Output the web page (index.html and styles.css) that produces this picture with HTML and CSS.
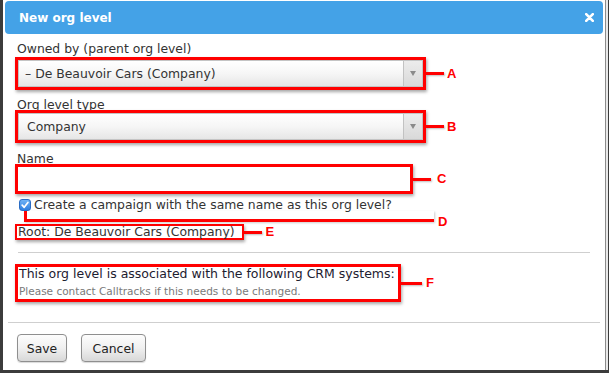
FILE: index.html
```html
<!DOCTYPE html>
<html>
<head>
<meta charset="utf-8">
<link rel="stylesheet" href="styles.css">
</head>
<body>
<div class="screen">
  <div class="dialog">
    <div class="header">
      <span class="title">New org level</span>
      <svg class="close" width="9" height="9" viewBox="0 0 9 9"><path d="M1.2 1.2 L7.8 7.8 M7.8 1.2 L1.2 7.8" stroke="#fff" stroke-width="2.6" stroke-linecap="round"/></svg>
    </div>
    <div class="content">
      <div class="label">Owned by (parent org level)</div>
      <div class="row">
        <div class="mark mark-select">
          <div class="select"><span class="value value-indent">– De Beauvoir Cars (Company)</span><span class="arrow"><i class="tri"></i></span></div>
        </div>
        <span class="callout"><i class="cline"></i><b class="letter">A</b></span>
      </div>

      <div class="label label-b">Org level type</div>
      <div class="row row-b">
        <div class="mark mark-select">
          <div class="select"><span class="value">Company</span><span class="arrow"><i class="tri"></i></span></div>
        </div>
        <span class="callout"><i class="cline"></i><b class="letter">B</b></span>
      </div>

      <div class="label label-c">Name</div>
      <div class="row row-c">
        <div class="mark mark-input"><div class="input"></div></div>
        <span class="callout"><i class="cline"></i><b class="letter">C</b></span>
      </div>

      <div class="check-row">
        <span class="checkbox"><svg width="8" height="8" viewBox="0 0 8 8"><path d="M1.2 4.2 L3.2 6.3 L6.9 1.4" fill="none" stroke="#fff" stroke-width="1.7" stroke-linecap="round" stroke-linejoin="round"/></svg></span>
        <span class="check-text">Create a campaign with the same name as this org level?</span>
        <span class="d-line"></span>
        <b class="letter d-letter">D</b>
      </div>

      <div class="row row-e">
        <div class="mark mark-e">Root: De Beauvoir Cars (Company)</div>
        <span class="callout"><i class="cline"></i><b class="letter">E</b></span>
      </div>

      <div class="rule"></div>

      <div class="row row-f">
        <div class="mark mark-f">
          <div class="crm">This org level is associated with the following CRM systems:</div>
          <div class="note">Please contact Calltracks if this needs to be changed.</div>
        </div>
        <span class="callout"><i class="cline"></i><b class="letter">F</b></span>
      </div>
    </div>
    <div class="footer">
      <button class="btn btn-save">Save</button>
      <button class="btn btn-cancel">Cancel</button>
    </div>
  </div>
  <div class="edge"></div>
</div>
</body>
</html>
```

FILE: styles.css
```css
html, body {
  margin: 0;
  padding: 0;
}
body {
  background: #3c3c3c;
  width: 609px;
  height: 373px;
  overflow: hidden;
  font-family: "DejaVu Sans", Verdana, sans-serif;
  font-size: 12.4px;
  color: #333;
}
.screen {
  display: flex;
  padding-left: 3px;
  height: 370px;
}
.dialog {
  width: 603px;
  height: 370px;
  background: #fff;
  border-right: 1px solid #8c8c8c;
  box-sizing: border-box;
  padding-top: 1px;
  display: flex;
  flex-direction: column;
}
.edge {
  width: 2px;
  height: 370px;
  background: #e9e9e9;
}
.header {
  margin: 0 2px;
  height: 33px;
  background: #44a2e7;
  border-radius: 4px;
  display: flex;
  align-items: center;
  justify-content: space-between;
  padding: 0 9px 0 14px;
}
.title {
  color: #fff;
  font-weight: bold;
  font-size: 12px;
}
.close {
  display: block;
}
.content {
  padding: 7px 0 0 12px;
  flex: 1;
}
.label {
  line-height: 16px;
  padding-left: 2px;
}
.label-b { margin-top: 7px; }
.label-c { margin-top: 8px; }
.row {
  display: flex;
  align-items: center;
}
.row-b { margin-top: -3px; }
.row-c { margin-top: -3px; }
.mark {
  border: 3px solid #f00;
  box-shadow: 1px 2px 3px rgba(0,0,0,0.35);
  background: #fff;
}
.mark-select {
  width: 405px;
  height: 27px;
}
.select {
  height: 27px;
  box-sizing: border-box;
  border: 1px solid #c4c4c4;
  background: linear-gradient(#ffffff, #f6f6f6 50%, #e6e6e6);
  display: flex;
  align-items: center;
  justify-content: space-between;
}
.value {
  padding-left: 8px;
  color: #333;
}
.value-indent {
  padding-left: 6px;
}
.arrow {
  width: 18px;
  height: 25px;
  border-left: 1px solid #c2c2c2;
  background: linear-gradient(#ececec, #d9d9d9);
  display: flex;
  align-items: center;
  justify-content: center;
}
.tri {
  width: 0;
  height: 0;
  border-left: 3.5px solid transparent;
  border-right: 3.5px solid transparent;
  border-top: 5px solid #8a8a8a;
}
.mark-input {
  width: 392px;
  height: 24px;
}
.input {
  height: 24px;
  background: #fff;
}
.callout {
  display: flex;
  align-items: center;
}
.cline {
  display: block;
  width: 18px;
  height: 3px;
  background: #f00;
  box-shadow: 1px 1px 2px rgba(0,0,0,0.25);
}
.letter {
  font-family: "Liberation Sans", Arial, sans-serif;
  font-weight: bold;
  font-size: 13px;
  color: #f00;
  margin-left: 3px;
  line-height: 14px;
}
.row-c .letter { margin-left: 6px; }
.check-row {
  position: relative;
  margin-top: 3px;
  height: 16px;
  display: flex;
  align-items: center;
  padding-left: 4px;
}
.checkbox {
  width: 12px;
  height: 12px;
  box-sizing: border-box;
  border-radius: 3px;
  background: linear-gradient(#6fb2f5, #2f7fe0);
  border: 1px solid #2a6cc4;
  display: flex;
  align-items: center;
  justify-content: center;
}
.check-text {
  margin-left: 3px;
  line-height: 16px;
}
.d-line {
  position: absolute;
  left: 9px;
  top: 14px;
  width: 407px;
  height: 8px;
  border-left: 3px solid #f00;
  border-bottom: 3px solid #f00;
  box-shadow: 1px 1px 2px rgba(0,0,0,0.2);
}
.d-letter {
  position: absolute;
  left: 423px;
  top: 18px;
  margin-left: 0;
}
.row-e {
  margin-top: 11px;
}
.mark-e {
  border-width: 2px;
  height: 12px;
  line-height: 12px;
  padding: 0 7px 0 1px;
  white-space: nowrap;
  color: #333;
}
.row-e .letter { margin-left: 4px; }
.rule {
  margin: 12px 15px 0 3px;
  height: 1px;
  background: #cfcfcf;
}
.row-f {
  margin-top: 11px;
}
.mark-f {
  width: 379px;
  height: 32px;
  padding-left: 1px;
}
.crm {
  line-height: 14px;
  color: #1d2030;
  white-space: nowrap;
  font-size: 12.5px;
}
.note {
  margin-top: 3px;
  line-height: 15px;
  font-size: 10.5px;
  color: #7a7a7a;
  white-space: nowrap;
}
.row-f .cline { width: 21px; }
.row-f .letter { margin-left: 4px; }
.footer {
  margin: 0 5px;
  border-top: 1px solid #cfcfcf;
  padding: 11px 0 8px 9px;
  display: flex;
  gap: 14px;
}
.btn {
  height: 28px;
  border: 1px solid #8f8f8f;
  border-radius: 4px;
  background: linear-gradient(#fdfdfd, #f0f0f0 50%, #d8d8d8);
  font-family: "DejaVu Sans", Verdana, sans-serif;
  font-size: 12.4px;
  color: #222;
  padding: 0;
  box-shadow: 0 1px 1px rgba(0,0,0,0.15);
}
.btn-save { width: 50px; }
.btn-cancel { width: 65px; }
```
